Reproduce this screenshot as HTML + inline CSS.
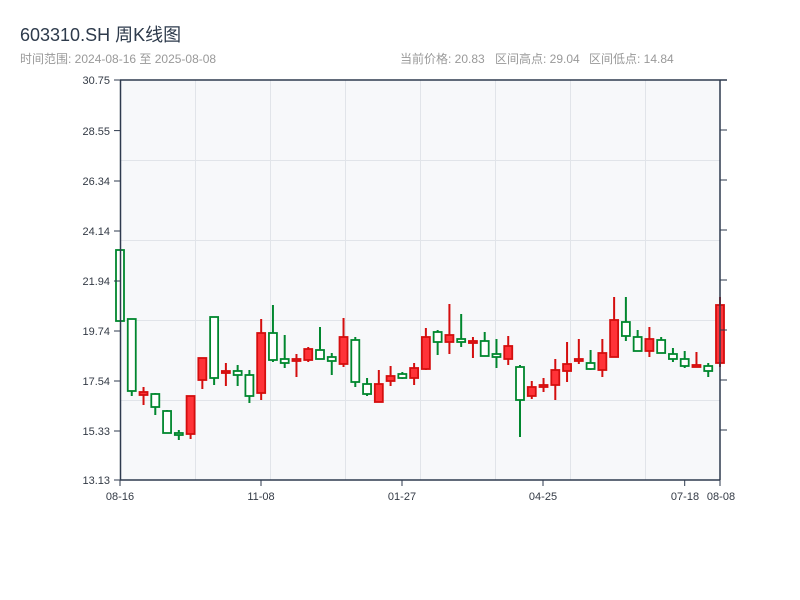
<!DOCTYPE html>
<html><head><meta charset="utf-8"><style>
html,body{margin:0;padding:0;background:#fff;width:800px;height:600px;overflow:hidden}
svg{display:block;font-family:"Liberation Sans","Noto Sans CJK SC",sans-serif}
</style></head><body>
<svg id="s" width="800" height="600" xmlns="http://www.w3.org/2000/svg">
<text x="20" y="41" font-size="18" fill="#2d3a4b">603310.SH 周K线图</text>
<text x="20" y="63" font-size="12" fill="#999">时间范围: 2024-08-16 至 2025-08-08</text>
<text y="63" font-size="12" fill="#999"><tspan x="400">当前价格: 20.83</tspan><tspan x="495">区间高点: 29.04</tspan><tspan x="589">区间低点: 14.84</tspan></text>
<rect x="120" y="80" width="600" height="400" fill="#f7f8fa"/>
<g stroke="#e1e4e9" stroke-width="1">
<line x1="195.5" y1="80" x2="195.5" y2="480"/><line x1="270.5" y1="80" x2="270.5" y2="480"/>
<line x1="345.5" y1="80" x2="345.5" y2="480"/><line x1="420.5" y1="80" x2="420.5" y2="480"/>
<line x1="495.5" y1="80" x2="495.5" y2="480"/><line x1="570.5" y1="80" x2="570.5" y2="480"/>
<line x1="645.5" y1="80" x2="645.5" y2="480"/>
<line x1="120" y1="160.5" x2="720" y2="160.5"/><line x1="120" y1="240.5" x2="720" y2="240.5"/>
<line x1="120" y1="320.5" x2="720" y2="320.5"/><line x1="120" y1="400.5" x2="720" y2="400.5"/>
</g>
<g id="c"></g>
<g stroke="#2e3a4e" stroke-width="1.5" fill="none">
<line x1="120" y1="80" x2="727" y2="80"/>
<line x1="120.5" y1="80" x2="120.5" y2="480"/>
<line x1="720" y1="80" x2="720" y2="480"/>
<line x1="120" y1="480" x2="720" y2="480"/>
</g>
<g stroke="#2e3a4e" stroke-width="1" id="t"></g>
<g font-size="11" fill="#333a45" text-anchor="end">
<text x="110" y="84">30.75</text><text x="110" y="135">28.55</text><text x="110" y="185">26.34</text>
<text x="110" y="235">24.14</text><text x="110" y="285">21.94</text><text x="110" y="335">19.74</text>
<text x="110" y="385">17.54</text><text x="110" y="435">15.33</text><text x="110" y="484">13.13</text>
</g>
<g font-size="11" fill="#333a45" text-anchor="middle">
<text x="120" y="500">08-16</text><text x="261" y="500">11-08</text><text x="402" y="500">01-27</text>
<text x="543" y="500">04-25</text><text x="685" y="500">07-18</text><text x="721" y="500">08-08</text>
</g>
</svg>
<script>
var d=[[250,321,250,321,'g'],[319,391,319,396,'g'],[392,395,387,405,'r'],[394,407,393,415,'g'],[411,433,410,433,'g'],[433,435,430,440,'g'],[396,434,396,439,'r'],[358,380,358,389,'r'],[317,378,317,385,'g'],[371,373,363,386,'r'],[371,375,365,386,'g'],[375,396,370,403,'g'],[333,393,319,400,'r'],[333,360,305,362,'g'],[359,363,335,368,'g'],[359,361,354,377,'r'],[349,360,347,362,'r'],[350,359,327,359,'g'],[357,361,353,375,'g'],[337,364,318,367,'r'],[340,382,337,387,'g'],[384,394,378,396,'g'],[384,402,370,402,'r'],[376,381,366,386,'r'],[374,378,372,379,'g'],[368,378,363,385,'r'],[337,369,328,370,'r'],[332,342,330,355,'g'],[335,342,304,354,'r'],[339,342,314,347,'g'],[341,343,337,358,'r'],[341,356,332,356,'g'],[354,357,339,368,'g'],[346,359,336,365,'r'],[367,400,365,437,'g'],[387,396,381,399,'r'],[385,387,378,392,'r'],[370,385,359,400,'r'],[364,371,342,382,'r'],[359,361,339,364,'r'],[363,369,350,370,'g'],[353,370,339,377,'r'],[320,357,297,357,'r'],[322,336,297,341,'g'],[337,351,330,351,'g'],[339,351,327,357,'r'],[340,353,337,353,'g'],[354,359,348,362,'g'],[359,366,351,368,'g'],[365,367,352,367,'r'],[366,371,363,377,'g'],[305,363,297,367,'r']];
var h='';
for(var i=0;i<d.length;i++){var x=120+i*600/51,c=d[i],col=c[4]=='g'?'#00872e':'#d40e0e',fill=c[4]=='g'?'#fff':'#ff3338';
h+='<line x1="'+x+'" x2="'+x+'" y1="'+c[2]+'" y2="'+c[3]+'" stroke="'+col+'" stroke-width="2"/>';
var hh=Math.max(c[1]-c[0],1.5);
h+='<rect x="'+(x-4)+'" y="'+c[0]+'" width="8" height="'+hh+'" fill="'+fill+'" stroke="'+col+'" stroke-width="1.8"/>';}
document.getElementById('c').innerHTML=h;
var t='';[80,130.6,181,231,281,331,381,431,480].forEach(function(y){t+='<line x1="114" x2="120" y1="'+y+'" y2="'+y+'"/>';});
[130,180,230,280,330,380,430].forEach(function(y){t+='<line x1="720" x2="727" y1="'+y+'" y2="'+y+'"/>';});
[120,261,402,543,684.7,720].forEach(function(x){t+='<line x1="'+x+'" x2="'+x+'" y1="480" y2="486"/>';});
document.getElementById('t').innerHTML=t;
</script>
</body></html>
